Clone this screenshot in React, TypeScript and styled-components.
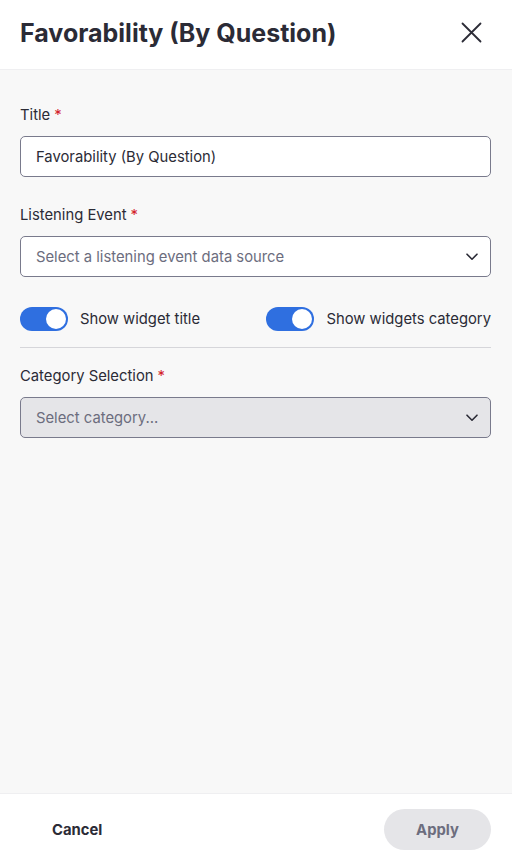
import React from "react";
import styled, { createGlobalStyle } from "styled-components";

const GlobalStyle = createGlobalStyle`
  html, body {
    margin: 0;
    padding: 0;
    height: 100%;
  }
  body {
    font-family: Inter, "Liberation Sans", sans-serif;
    color: #2b2b36;
    background: #ffffff;
  }
  #root {
    height: 100%;
  }
`;

const Panel = styled.div`
  display: flex;
  flex-direction: column;
  height: 863px;
  width: 512px;
`;

const Header = styled.header`
  height: 70px;
  box-sizing: border-box;
  display: flex;
  align-items: center;
  justify-content: space-between;
  padding: 0 30px 4px 20px;
  background: #ffffff;
  border-bottom: 1px solid #efeff1;
`;

const Heading = styled.h1`
  margin: 0;
  font-size: 25px;
  font-weight: 700;
  color: #2b2b36;
`;

const CloseButton = styled.button`
  border: 0;
  background: transparent;
  padding: 0;
  width: 21px;
  height: 21px;
  display: flex;
  align-items: center;
  justify-content: center;
  cursor: pointer;
`;

const Body = styled.main`
  flex: 1;
  background: #f8f8f8;
  padding: 35px 21px 0 20px;
  display: flex;
  flex-direction: column;
`;

const Field = styled.div`
  display: flex;
  flex-direction: column;
  gap: 11px;
  margin-bottom: 28px;
`;

const Label = styled.label`
  font-size: 14.8px;
  line-height: 20px;
  color: #2b2b36;
`;

const Required = styled.span`
  color: #d3222a;
  margin-left: 4px;
`;

const Box = styled.div<{ disabled?: boolean }>`
  height: 41px;
  box-sizing: border-box;
  border: 1px solid #797a8c;
  border-radius: 5px;
  background: ${({ disabled }) => (disabled ? "#e5e5e8" : "#ffffff")};
  display: flex;
  align-items: center;
  justify-content: space-between;
  padding: 0 12px 0 15px;
  font-size: 14.8px;
`;

const Value = styled.span`
  color: #2b2b36;
`;

const Placeholder = styled.span`
  color: #6c6d7e;
`;

const ToggleRow = styled.div`
  display: flex;
  justify-content: space-between;
  align-items: center;
  margin-top: 2px;
  padding-bottom: 16px;
  border-bottom: 1px solid #d6d6da;
  margin-bottom: 18px;
`;

const ToggleItem = styled.label`
  display: flex;
  align-items: center;
  gap: 12px;
  font-size: 14.8px;
  color: #2b2b36;
`;

const Track = styled.span<{ on?: boolean }>`
  width: 48px;
  height: 24px;
  box-sizing: border-box;
  border-radius: 12px;
  background: ${({ on }) => (on ? "#2f6fe0" : "#c9c9cf")};
  display: flex;
  align-items: center;
  justify-content: ${({ on }) => (on ? "flex-end" : "flex-start")};
  padding: 2px;
`;

const Knob = styled.span`
  width: 20px;
  height: 20px;
  border-radius: 50%;
  background: #ffffff;
`;

const Footer = styled.footer`
  height: 70px;
  box-sizing: border-box;
  background: #ffffff;
  border-top: 1px solid #efeff1;
  display: flex;
  align-items: center;
  justify-content: space-between;
  padding: 2px 21px 0 52px;
`;

const TextButton = styled.button`
  border: 0;
  background: transparent;
  padding: 0;
  font-family: inherit;
  font-size: 14.8px;
  font-weight: 700;
  color: #2b2b36;
`;

const PillButton = styled.button`
  border: 0;
  width: 107px;
  height: 41px;
  border-radius: 21px;
  background: #e5e5e8;
  color: #6c6d7e;
  font-family: inherit;
  font-size: 14.8px;
  font-weight: 700;
`;

const Chevron = () => (
  <svg width="12" height="8" viewBox="0 0 12 8" fill="none">
    <path d="M1 1.2 6 6.2 11 1.2" stroke="#2b2b36" strokeWidth="1.6" strokeLinecap="round" strokeLinejoin="round" />
  </svg>
);

const Toggle = ({ on, label }: { on?: boolean; label: string }) => (
  <ToggleItem>
    <Track on={on}>
      <Knob />
    </Track>
    {label}
  </ToggleItem>
);

export default function App() {
  return (
    <Panel>
      <GlobalStyle />
      <Header>
        <Heading>Favorability (By Question)</Heading>
        <CloseButton aria-label="Close">
          <svg width="21" height="21" viewBox="0 0 21 21" fill="none">
            <path d="M1.5 1.5 19.5 19.5M19.5 1.5 1.5 19.5" stroke="#2b2b36" strokeWidth="1.8" strokeLinecap="round" />
          </svg>
        </CloseButton>
      </Header>
      <Body>
        <Field>
          <Label>
            Title<Required>*</Required>
          </Label>
          <Box>
            <Value>Favorability (By Question)</Value>
          </Box>
        </Field>
        <Field>
          <Label>
            Listening Event<Required>*</Required>
          </Label>
          <Box>
            <Placeholder>Select a listening event data source</Placeholder>
            <Chevron />
          </Box>
        </Field>
        <ToggleRow>
          <Toggle on label="Show widget title" />
          <Toggle on label="Show widgets category" />
        </ToggleRow>
        <Field>
          <Label>
            Category Selection<Required>*</Required>
          </Label>
          <Box disabled>
            <Placeholder>Select category...</Placeholder>
            <Chevron />
          </Box>
        </Field>
      </Body>
      <Footer>
        <TextButton>Cancel</TextButton>
        <PillButton disabled>Apply</PillButton>
      </Footer>
    </Panel>
  );
}
